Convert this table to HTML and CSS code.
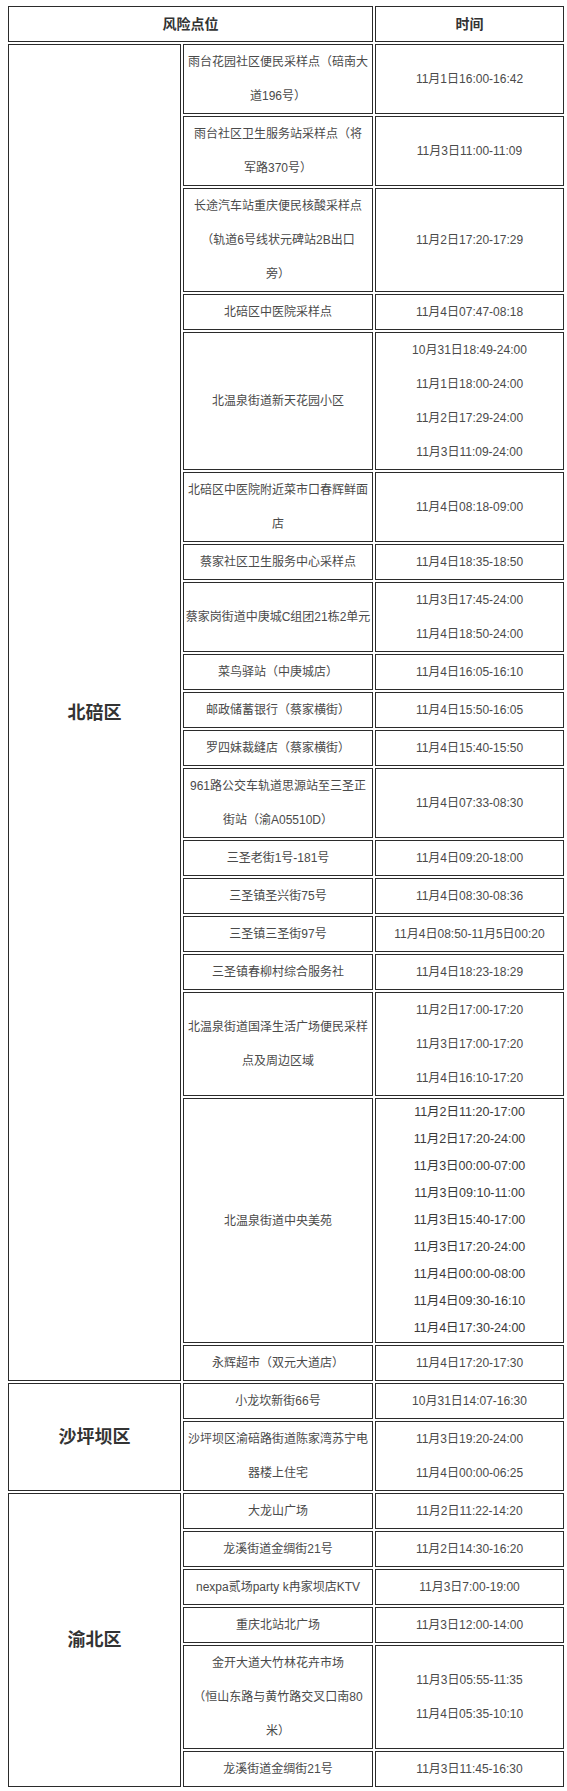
FILE: index.html
```html
<!DOCTYPE html>
<html lang="zh-CN">
<head>
<meta charset="utf-8">
<title>风险点位</title>
<link rel="stylesheet" href="styles.css">
</head>
<body>
<div class="wrap">
<table class="risk">
  <colgroup>
    <col class="c-district">
    <col class="c-place">
    <col class="c-time">
  </colgroup>
  <thead>
    <tr><th colspan="2">风险点位</th><th>时间</th></tr>
  </thead>
  <tbody>
    <tr><td class="district" rowspan="19">北碚区</td><td>雨台花园社区便民采样点（碚南大<br>道196号）</td><td>11月1日16:00-16:42</td></tr>
    <tr><td>雨台社区卫生服务站采样点（将<br>军路370号）</td><td>11月3日11:00-11:09</td></tr>
    <tr><td>长途汽车站重庆便民核酸采样点<br>（轨道6号线状元碑站2B出口<br>旁）</td><td>11月2日17:20-17:29</td></tr>
    <tr><td>北碚区中医院采样点</td><td>11月4日07:47-08:18</td></tr>
    <tr><td>北温泉街道新天花园小区</td><td>10月31日18:49-24:00<br>11月1日18:00-24:00<br>11月2日17:29-24:00<br>11月3日11:09-24:00</td></tr>
    <tr><td>北碚区中医院附近菜市口春辉鲜面<br>店</td><td>11月4日08:18-09:00</td></tr>
    <tr><td>蔡家社区卫生服务中心采样点</td><td>11月4日18:35-18:50</td></tr>
    <tr><td>蔡家岗街道中庚城C组团21栋2单元</td><td>11月3日17:45-24:00<br>11月4日18:50-24:00</td></tr>
    <tr><td>菜鸟驿站（中庚城店）</td><td>11月4日16:05-16:10</td></tr>
    <tr><td>邮政储蓄银行（蔡家横街）</td><td>11月4日15:50-16:05</td></tr>
    <tr><td>罗四妹裁缝店（蔡家横街）</td><td>11月4日15:40-15:50</td></tr>
    <tr><td>961路公交车轨道思源站至三圣正<br>街站（渝A05510D）</td><td>11月4日07:33-08:30</td></tr>
    <tr><td>三圣老街1号-181号</td><td>11月4日09:20-18:00</td></tr>
    <tr><td>三圣镇圣兴街75号</td><td>11月4日08:30-08:36</td></tr>
    <tr><td>三圣镇三圣街97号</td><td>11月4日08:50-11月5日00:20</td></tr>
    <tr><td>三圣镇春柳村综合服务社</td><td>11月4日18:23-18:29</td></tr>
    <tr><td>北温泉街道国泽生活广场便民采样<br>点及周边区域</td><td>11月2日17:00-17:20<br>11月3日17:00-17:20<br>11月4日16:10-17:20</td></tr>
    <tr><td>北温泉街道中央美苑</td><td class="tight">11月2日11:20-17:00<br>11月2日17:20-24:00<br>11月3日00:00-07:00<br>11月3日09:10-11:00<br>11月3日15:40-17:00<br>11月3日17:20-24:00<br>11月4日00:00-08:00<br>11月4日09:30-16:10<br>11月4日17:30-24:00</td></tr>
    <tr><td>永辉超市（双元大道店）</td><td>11月4日17:20-17:30</td></tr>
    <tr><td class="district" rowspan="2">沙坪坝区</td><td>小龙坎新街66号</td><td>10月31日14:07-16:30</td></tr>
    <tr><td>沙坪坝区渝碚路街道陈家湾苏宁电<br>器楼上住宅</td><td>11月3日19:20-24:00<br>11月4日00:00-06:25</td></tr>
    <tr><td class="district" rowspan="6">渝北区</td><td>大龙山广场</td><td>11月2日11:22-14:20</td></tr>
    <tr><td>龙溪街道金绸街21号</td><td>11月2日14:30-16:20</td></tr>
    <tr><td>nexpa贰场party k冉家坝店KTV</td><td>11月3日7:00-19:00</td></tr>
    <tr><td>重庆北站北广场</td><td>11月3日12:00-14:00</td></tr>
    <tr><td>金开大道大竹林花卉市场<br>（恒山东路与黄竹路交叉口南80<br>米）</td><td>11月3日05:55-11:35<br>11月4日05:35-10:10</td></tr>
    <tr><td>龙溪街道金绸街21号</td><td>11月3日11:45-16:30</td></tr>
  </tbody>
</table>
</div>
</body>
</html>
```

FILE: styles.css
```css
html, body {
  margin: 0;
  padding: 0;
  background: #ffffff;
}

.wrap {
  padding: 4px 0 0 6px;
}

.risk {
  border-collapse: separate;
  border-spacing: 2px;
  table-layout: fixed;
  width: 560px;
  font-family: "Liberation Sans", "Noto Sans CJK SC", sans-serif;
  font-size: 12px;
  color: #4a4a4a;
}

.c-district { width: 173px; }
.c-place { width: 190px; }
.c-time { width: 189px; }

.risk th,
.risk td {
  border: 1px solid #2b2b2b;
  padding: 0 1px;
  text-align: center;
  vertical-align: middle;
  line-height: 34px;
  white-space: nowrap;
}

.risk th {
  font-size: 14px;
  font-weight: bold;
  color: #333333;
}

.risk td.district {
  font-size: 18px;
  font-weight: bold;
  color: #333333;
}

.risk td.tight {
  line-height: 27px;
  font-size: 12.5px;
  color: #3a3a3a;
}
```
